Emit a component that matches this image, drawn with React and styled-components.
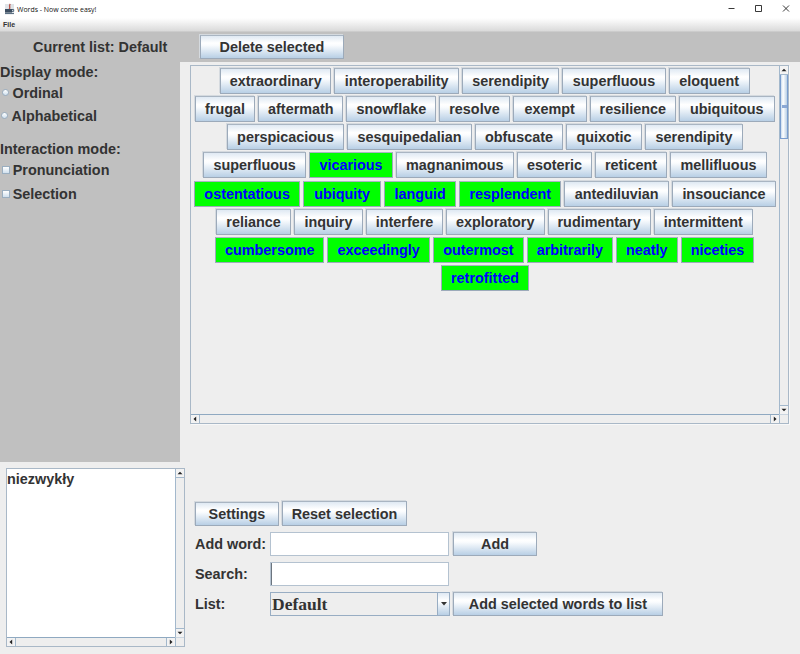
import React from "react";
import styled, { createGlobalStyle, css } from "styled-components";

const Global = createGlobalStyle`
  * { box-sizing: border-box; }
  body { margin: 0; background: #eee; overflow: hidden; }
`;

const Window = styled.div`
  width: 800px;
  height: 654px;
  display: flex;
  flex-direction: column;
  background: #eeeeee;
  color: #333;
  font: bold 14.4px "Liberation Sans", Arial, sans-serif;
  white-space: nowrap;
`;

const TitleBar = styled.header`
  height: 18px;
  flex: none;
  display: flex;
  align-items: center;
  padding-left: 4px;
  background: #fff;
  svg { display: block; }
`;

const Title = styled.span`
  flex: 1;
  margin-left: 2px;
  color: #111;
  font: 400 6.95px "Open Sans", "Noto Sans", sans-serif;
`;

const WindowControls = styled.svg`
  width: 72px;
  height: 18px;
`;

const MenuBar = styled.nav`
  height: 14px;
  flex: none;
  padding: 2px 3px 0;
  font-size: 7px;
  line-height: 9px;
  background: linear-gradient(#fff, #dadada);
  border-bottom: 1px solid #ccc;
`;

const TopPanel = styled.div`
  height: 30px;
  flex: none;
  display: flex;
  align-items: center;
  background: #c0c0c0;
`;

const CurrentList = styled.div`
  width: 200px;
  padding-left: 33px;
`;

const Button = styled.button`
  width: ${(p) => p.$w}px;
  height: ${(p) => p.$h || 24}px;
  flex: none;
  padding: 0;
  display: flex;
  align-items: center;
  justify-content: center;
  font: inherit;
  color: #333;
  border: 1px solid #9caaba;
  border-top-color: #a9b5c2;
  border-radius: 0;
  box-shadow: -1px -1px 0 #d5dadf;
  background: linear-gradient(#dfe9f3 0%, #fff 32%, #fafcfe 42%, #b8cfe5 100%);
  ${(p) => p.$selected && css`
    color: #00f;
    background: #0f0;
    box-shadow: none;
  `}
`;

const Upper = styled.div`
  display: flex;
  height: 400px;
  flex: none;
`;

const SidePanel = styled.aside`
  width: 180px;
  flex: none;
  background: #c0c0c0;
`;

const SideLabel = styled.div`
  height: ${(p) => p.$h}px;
  line-height: 20px;
`;

const Option = styled.label`
  height: ${(p) => p.$h}px;
  line-height: 20px;
  padding-left: ${(p) => p.$left}px;
  display: flex;
  align-items: flex-start;
`;

const Mark = styled.i`
  width: ${(p) => (p.$round ? 7 : 8)}px;
  height: ${(p) => (p.$round ? 7 : 8)}px;
  flex: none;
  margin: 6px ${(p) => p.$gap}px 0 0;
  border: 1px solid #9aaec0;
  border-radius: ${(p) => (p.$round ? "50%" : "0")};
  background: linear-gradient(#fff, #d0e0ee);
`;

const ScrollPane = styled.div`
  width: ${(p) => p.$w}px;
  height: ${(p) => p.$h}px;
  margin: ${(p) => p.$m};
  flex: none;
  display: grid;
  grid-template-columns: 1fr 9px;
  grid-template-rows: 1fr 9px;
  border: 1px solid #a9b8c7;
  box-shadow: 1px 1px 0 ${(p) => (p.$glow ? "#f8f8f8" : "transparent")};
`;

const WordList = styled.div`
  display: flex;
  flex-direction: column;
  gap: 2.17px;
  padding-top: 2px;
  min-width: 0;
`;

const WordRow = styled.div`
  display: flex;
  gap: 3px;
  padding-left: ${(p) => p.$x}px;
`;

const TextArea = styled.div`
  background: #fff;
  line-height: 21px;
`;

const VBar = styled.div`
  display: flex;
  flex-direction: column;
  border-left: 1px solid #a3b8cc;
`;

const HBar = styled.div`
  display: flex;
  border-top: 1px solid #8fa9c1;
`;

const Corner = styled.div`
  border-left: 1px solid #a3b8cc;
  border-top: 1px solid #cbd5df;
`;

const ArrowBox = styled.div`
  width: 8px;
  height: 8px;
  flex: none;
  display: flex;
  background: #f3f3f3;
  svg { display: block; width: 8px; height: 8px; }
`;

const Track = styled.div`
  flex: 1;
  border: 1px solid #a3b8cc;
  ${(p) => (p.$across ? "border-width: 0 1px;" : "border-width: 1px 0;")}
`;

const Thumb = styled.div`
  height: 64px;
  border: 1px solid #7a9dce;
  border-top: 0;
  background: linear-gradient(90deg, #c9dbec, #fff 35%, #b8cfe5);
  display: flex;
  align-items: center;
  justify-content: center;
  &::after {
    content: "";
    width: 5px;
    height: 3px;
    background: #8ba8d4;
  }
`;

const Lower = styled.div`
  display: flex;
  flex: 1;
  min-height: 0;
`;

const Controls = styled.section`
  margin: 37px 0 0 10px;
  display: flex;
  flex-direction: column;
`;

const ControlRow = styled.div`
  height: 30px;
  display: flex;
  align-items: center;
  &:first-child { height: 29px; margin-bottom: 1px; gap: 3px; }
`;

const FieldLabel = styled.div`
  width: 75px;
`;

const Field = styled.div`
  width: 179px;
  height: 24px;
  margin: -1px 4px 0 0;
  background: #fff;
  border: 1px solid #b4c2d0;
  ${(p) => p.$caret && "box-shadow: inset 1px 0 0 #6c757f;"}
`;

const Combo = styled.div`
  width: 180px;
  height: 24px;
  margin-right: 3px;
  display: flex;
  border: 1px solid #98adc3;
  font: bold 17.5px/23px "Liberation Serif", "Times New Roman", serif;
  padding-left: 1px;
`;

const ComboButton = styled.div`
  width: 12px;
  margin-left: auto;
  border-left: 1px solid #98adc3;
  background: linear-gradient(#dfe9f3, #fff 35%, #b8cfe5);
  display: flex;
  align-items: center;
  justify-content: center;
`;

const arrows = {
  up: "M1.5 5.3 4 2.8 6.5 5.3Z",
  down: "M1.5 2.8h5L4 5.3Z",
  left: "M5.2 1.5v5L2.5 4Z",
  right: "M2.8 1.5v5L5.5 4Z",
};

const Arrow = ({ dir }) => (
  <ArrowBox>
    <svg viewBox="0 0 8 8"><path d={arrows[dir]} fill="#222" /></svg>
  </ArrowBox>
);

const Scrolling = ({ children, thumb, ...rest }) => (
  <ScrollPane {...rest}>
    {children}
    <VBar>
      <Arrow dir="up" />
      <Track>{thumb && <Thumb />}</Track>
      <Arrow dir="down" />
    </VBar>
    <HBar>
      <Arrow dir="left" />
      <Track $across />
      <Arrow dir="right" />
    </HBar>
    <Corner />
  </ScrollPane>
);

/* Each row: left inset, then [word, width, selected]. */
const rows = [
  [29, ["extraordinary", 111.3], ["interoperability", 124.7], ["serendipity", 97.3], ["superfluous", 103.4], ["eloquent", 81]],
  [3.7, ["frugal", 60.6], ["aftermath", 85.2], ["snowflake", 89.8], ["resolve", 70.4], ["exempt", 74], ["resilience", 86.3], ["ubiquitous", 95.7]],
  [36, ["perspicacious", 117], ["sesquipedalian", 125], ["obfuscate", 88], ["quixotic", 76], ["serendipity", 98]],
  [12, ["superfluous", 103.3], ["vicarious", 83.4, true], ["magnanimous", 118.3], ["esoteric", 75], ["reticent", 72], ["mellifluous", 97]],
  [3, ["ostentatious", 106.3, true], ["ubiquity", 77.7, true], ["languid", 72.3, true], ["resplendent", 102, true], ["antediluvian", 104.7], ["insouciance", 104]],
  [25, ["reliance", 75], ["inquiry", 69], ["interfere", 77], ["exploratory", 98.5], ["rudimentary", 103.2], ["intermittent", 99.3]],
  [24.2, ["cumbersome", 109.1, true], ["exceedingly", 102.8, true], ["outermost", 90.6, true], ["arbitrarily", 86.3, true], ["neatly", 61.7, true], ["niceties", 73.8, true]],
  [250, ["retrofitted", 88, true]],
];

export default function App() {
  return (
    <Window>
      <Global />
      <TitleBar>
        <svg width="11" height="12" viewBox="0 0 11 12">
          <path d="M1 1h9v10H1z" fill="#dfe4e8" />
          <path d="M6.3 1C4.2 3 7 4 5.2 6" stroke="#b8554c" strokeWidth="1.4" fill="none" />
          <path d="M1 6h7v3.6H1z" fill="#3b4d60" />
          <path d="M8 6.5h1.7v1.9H8M1 10.6h9" stroke="#50657a" fill="none" />
        </svg>
        <Title>Words - Now come easy!</Title>
        <WindowControls viewBox="0 0 72 18" fill="none" stroke="#222" strokeWidth="0.9">
          <path d="M0.5 8.5h6M27.5 5.5h6v6h-6zM55 5.5l6 6M61 5.5l-6 6" />
        </WindowControls>
      </TitleBar>
      <MenuBar>File</MenuBar>
      <TopPanel>
        <CurrentList>Current list: Default</CurrentList>
        <Button $w={144}>Delete selected</Button>
      </TopPanel>
      <Upper>
        <SidePanel>
          <SideLabel $h={21}>Display mode:</SideLabel>
          <Option $h={23} $left={2}><Mark $round $gap={3.5} />Ordinal</Option>
          <Option $h={33} $left={1}><Mark $round $gap={3.5} />Alphabetical</Option>
          <SideLabel $h={21}>Interaction mode:</SideLabel>
          <Option $h={24} $left={2}><Mark $gap={2.7} />Pronunciation</Option>
          <Option $h={24} $left={2}><Mark $gap={2.7} />Selection</Option>
        </SidePanel>
        <Scrolling $w={599} $h={359} $m="3px 0 0 10px" $glow thumb>
          <WordList>
            {rows.map(([x, ...words], r) => (
              <WordRow key={r} $x={x}>
                {words.map(([word, w, on]) => (
                  <Button key={word} $w={w} $h={26} $selected={on}>{word}</Button>
                ))}
              </WordRow>
            ))}
          </WordList>
        </Scrolling>
      </Upper>
      <Lower>
        <Scrolling $w={179} $h={179} $m="6px 0 0 6px">
          <TextArea>niezwykły</TextArea>
        </Scrolling>
        <Controls>
          <ControlRow>
            <Button $w={84} $h={24}>Settings</Button>
            <Button $w={125} $h={25}>Reset selection</Button>
          </ControlRow>
          <ControlRow>
            <FieldLabel>Add word:</FieldLabel>
            <Field />
            <Button $w={84}>Add</Button>
          </ControlRow>
          <ControlRow>
            <FieldLabel>Search:</FieldLabel>
            <Field $caret />
          </ControlRow>
          <ControlRow>
            <FieldLabel>List:</FieldLabel>
            <Combo>
              Default
              <ComboButton>
                <svg width="6" height="4" viewBox="0 0 6 4"><path d="M0 0h6L3 3.5Z" fill="#333" /></svg>
              </ComboButton>
            </Combo>
            <Button $w={210}>Add selected words to list</Button>
          </ControlRow>
        </Controls>
      </Lower>
    </Window>
  );
}
